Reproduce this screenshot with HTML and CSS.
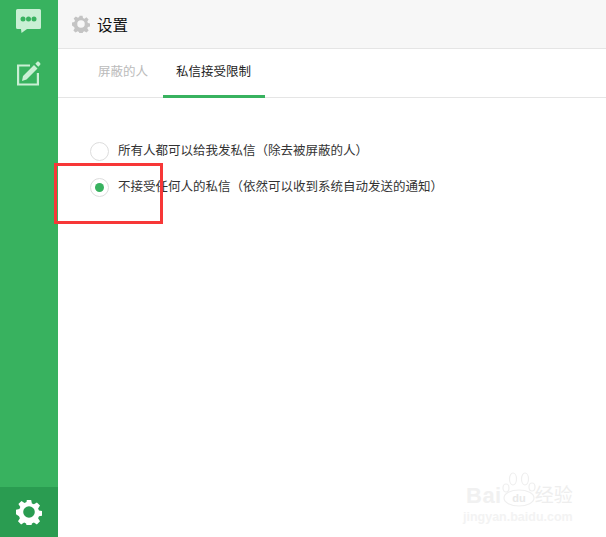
FILE: index.html
```html
<!DOCTYPE html>
<html lang="zh">
<head>
<meta charset="utf-8">
<title>设置</title>
<link rel="stylesheet" href="styles.css">
</head>
<body>
<div class="app">
  <aside class="sidebar">
    <div class="nav-top">
      <svg class="icon-chat" width="25" height="24" viewBox="0 0 25 24"><path fill="#c9efd4" d="M1.500 0h22A1.500 1.500 0 0 1 25 1.500v17a1.500 1.500 0 0 1-1.500 1.500H11L5.500 24 5 20H1.500A1.500 1.500 0 0 1 0 18.500v-17A1.500 1.500 0 0 1 1.500 0z"/><circle cx="7" cy="10" r="2.500" fill="#38b25f"/><circle cx="12.500" cy="10" r="2.500" fill="#38b25f"/><circle cx="18" cy="10" r="2.500" fill="#38b25f"/></svg>
      <svg class="icon-edit" width="24" height="25" viewBox="0 0 24 25"><path fill="none" stroke="#c9efd4" stroke-width="2.200" d="M13 4.500H1.100v19h19.800V12"/><path fill="#c9efd4" d="M6 15 17 4l3.500 3.500-11 11L5 20zM18.300 2.700 20 1c.6-.6 1.400-.6 2 0l1 1c.6.600.6 1.400 0 2l-1.700 1.700z"/></svg>
    </div>
    <div class="nav-bottom">
      <svg width="26" height="26" viewBox="0 0 26 26"><path fill="#fff" fill-rule="evenodd" d="M10.800 1h4.400l.7 3.400 2 .9 3-1.900 3.100 3.100-1.900 3 .9 2 3.400.7v4.400l-3.400.7-.9 2 1.900 3-3.100 3.100-3-1.900-2 .9-.7 3.400h-4.400l-.7-3.400-2-.9-3 1.900-3.100-3.100 1.900-3-.9-2L0 15.200v-4.400l3.400-.7.9-2-1.900-3 3.100-3.100 3 1.900 2-.9zM13 7.200a5.800 5.800 0 1 0 0 11.600 5.800 5.800 0 0 0 0-11.600z"/></svg>
    </div>
  </aside>
  <main class="content">
    <header class="topbar">
      <svg class="gear" width="18" height="18" viewBox="0 0 26 26"><path fill="#c4c4c4" fill-rule="evenodd" d="M10.800 1h4.400l.7 3.400 2 .9 3-1.900 3.100 3.100-1.900 3 .9 2 3.400.7v4.400l-3.400.7-.9 2 1.900 3-3.100 3.100-3-1.900-2 .9-.7 3.400h-4.400l-.7-3.400-2-.9-3 1.900-3.100-3.100 1.900-3-.9-2L0 15.200v-4.400l3.400-.7.9-2-1.900-3 3.100-3.100 3 1.900 2-.9zM13 7.600a5.400 5.400 0 1 0 0 10.800 5.400 5.400 0 0 0 0-10.800z"/></svg>
      <span class="title">设置</span>
    </header>
    <nav class="tabs">
      <a class="tab">屏蔽的人</a>
      <a class="tab tab-active">私信接受限制</a>
    </nav>
    <section class="options">
      <label class="option"><span class="radio"></span><span>所有人都可以给我发私信（除去被屏蔽的人）</span></label>
      <label class="option"><span class="radio radio-on"></span><span>不接受任何人的私信（依然可以收到系统自动发送的通知）</span></label>
    </section>
  </main>
</div>
<div class="highlight"></div>
<div class="watermark">
  <div class="wm-top"><span class="wm-bai">Bai</span><svg class="wm-paw" width="36" height="36" viewBox="0 0 36 36"><g fill="none" stroke="#efefef" stroke-width="1.200"><ellipse cx="5" cy="16" rx="3" ry="4"/><ellipse cx="12" cy="7" rx="3.500" ry="6"/><ellipse cx="24" cy="7" rx="3.500" ry="6"/><ellipse cx="31" cy="15" rx="3" ry="4"/><ellipse cx="18" cy="26" rx="15" ry="8"/></g><text x="18" y="30" text-anchor="middle" class="wm-du">du</text></svg><span class="wm-cn">经验</span></div>
  <div class="wm-url">jingyan.baidu.com</div>
</div>
</body>
</html>
```
FILE: styles.css
```css
* { box-sizing: border-box; }
html, body { margin: 0; height: 100%; overflow: hidden; }
body {
  font-family: "Liberation Sans", "Noto Sans CJK SC", sans-serif;
  background: #fff;
  position: relative;
}
.app { display: flex; height: 537px; }
.sidebar {
  width: 58px;
  flex: none;
  background: #38b25f;
  display: flex;
  flex-direction: column;
  justify-content: space-between;
}
.nav-top { display: flex; flex-direction: column; align-items: center; }
.icon-chat { margin-top: 9px; margin-right: 1px; }
.icon-edit { margin-top: 28px; }
.nav-bottom {
  height: 50px;
  background: #2a9c51;
  display: flex;
  align-items: center;
  justify-content: center;
}
.content { flex: 1; min-width: 0; }
.topbar {
  height: 49px;
  background: #f7f7f7;
  border-bottom: 1px solid #e5e5e5;
  display: flex;
  align-items: center;
  gap: 7px;
  padding: 0 0 0 14px;
}
.title { font-size: 15.500px; color: #111; }
.tabs {
  display: flex;
  height: 49px;
  border-bottom: 1px solid #e5e5e5;
  padding-left: 28px;
}
.tab {
  font-size: 12.500px;
  color: #bbb;
  height: 49px;
  line-height: 46px;
  padding: 0 15px 0 12px;
}
.tab-active { color: #222; border-bottom: 3px solid #38b25f; padding: 0 14px 0 13px; }
.options { padding-top: 42px; display: flex; flex-direction: column; gap: 18px; }
.option {
  display: flex;
  align-items: center;
  gap: 9px;
  padding-left: 32px;
  height: 18px;
  font-size: 12.500px;
  color: #333;
}
.radio {
  width: 19px;
  height: 19px;
  margin-top: 5px;
  border-radius: 50%;
  border: 1px solid #ddd;
  background: #fff;
  display: flex;
  align-items: center;
  justify-content: center;
  flex: none;
}
.radio-on::after {
  content: "";
  width: 9px;
  height: 9px;
  border-radius: 50%;
  background: #38b25f;
}
.highlight {
  position: absolute;
  left: 54px;
  top: 163px;
  width: 109px;
  height: 61px;
  border: 3px solid #f73737;
}
.watermark {
  position: absolute;
  left: 463px;
  top: 472px;
  width: 125px;
}
.wm-top { display: flex; align-items: flex-end; height: 36px; }
.wm-bai { font-size: 22px; font-weight: 700; line-height: 24px; color: #f1f1f1; margin-left: 3px; letter-spacing: 0.500px; }
.wm-paw { margin-left: -1px; }
.wm-du { font-size: 11px; font-weight: 700; fill: #e9e9e9; }
.wm-cn { font-size: 19px; line-height: 24px; margin-left: -2px; color: #eeeeee; }
.wm-url { font-size: 12.500px; font-weight: 700; line-height: 14px; margin-top: 2px; color: #f3f3f3; }
```
